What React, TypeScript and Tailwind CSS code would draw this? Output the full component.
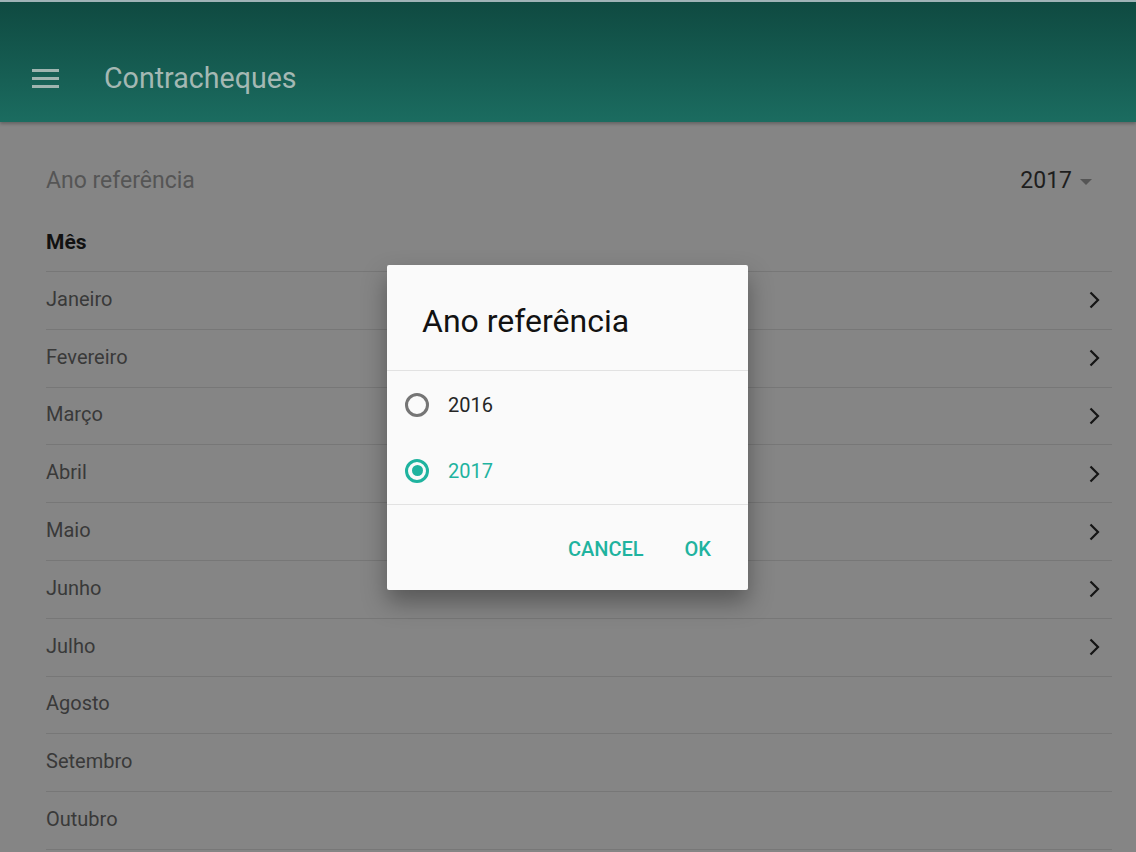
const months = [
  { name: "Janeiro", arrow: true },
  { name: "Fevereiro", arrow: true },
  { name: "Março", arrow: true },
  { name: "Abril", arrow: true },
  { name: "Maio", arrow: true },
  { name: "Junho", arrow: true },
  { name: "Julho", arrow: true },
  { name: "Agosto", arrow: false },
  { name: "Setembro", arrow: false },
  { name: "Outubro", arrow: false },
]

const Chevron = () => (
  <svg width="14" height="20" viewBox="0 0 14 20" fill="none">
    <path d="M4.5 2.5 L12 10 L4.5 17.5" stroke="#151515" strokeWidth="2.2" />
  </svg>
)

const Radio = ({ checked }: { checked: boolean }) => (
  <div
    className={`size-[24px] rounded-full border-[3px] flex items-center justify-center ${
      checked ? "border-[#1fb39f]" : "border-[#757575]"
    }`}
  >
    {checked && <div className="size-[11px] rounded-full bg-[#1fb39f]" />}
  </div>
)

export default function App() {
  return (
    <div className="relative w-[1136px] h-[852px] overflow-hidden bg-[#858585] font-['Roboto','Noto_Sans',sans-serif]">
      {/* App bar */}
      <header className="h-[122px] border-t-2 border-[#9fb3b6] bg-gradient-to-b from-[#0f4a41] to-[#1b6c60] flex items-center pl-[32px] pt-[32px] shadow-[0_2px_3px_rgba(0,0,0,0.25)]">
        <div className="flex flex-col gap-[5px] w-[27px]">
          <div className="h-[3px] bg-[#9fb5b0]" />
          <div className="h-[3px] bg-[#9fb5b0]" />
          <div className="h-[3px] bg-[#9fb5b0]" />
        </div>
        <div className="ml-[45px] text-[28.6px] text-[#a4b8b3]">Contracheques</div>
      </header>

      {/* Content */}
      <main className="px-[46px] pr-[24px]">
        <div className="flex items-center justify-between h-[58px] mt-[28px] pt-[5px]">
          <span className="text-[23px] text-[#555555]">Ano referência</span>
          <div className="flex items-center gap-[8px] mr-[20px]">
            <span className="text-[23px] text-[#1e1e1e]">2017</span>
            <svg width="12" height="6" viewBox="0 0 12 6">
              <path d="M0 0 L12 0 L6 6 Z" fill="#555555" />
            </svg>
          </div>
        </div>
        <div className="h-[63px] flex items-center pt-[6px] text-[21px] font-bold text-[#111111]">Mês</div>
        <ul>
          {months.map((m) => (
            <li
              key={m.name}
              className="h-[57.8px] border-t border-[#777777] flex items-center justify-between pr-[12px]"
            >
              <span className="text-[20px] text-[#393939] mt-[-3px]">{m.name}</span>
              {m.arrow && <Chevron />}
            </li>
          ))}
          <li className="border-t border-[#777777]" />
        </ul>
      </main>

      {/* Dialog */}
      <div className="absolute left-[387px] top-[265px] w-[361px] h-[325px] bg-[#fafafa] rounded-[2px] shadow-[0_12px_24px_rgba(0,0,0,0.35)] flex flex-col">
        <div className="h-[106px] flex items-center pl-[35px] border-b border-[#e2e2e2]">
          <span className="text-[32px] text-[#121212] mt-[6px]">Ano referência</span>
        </div>
        <div className="h-[134px] flex flex-col justify-center border-b border-[#e2e2e2]">
          <div className="h-[66px] flex items-center pl-[18px] gap-[19px]">
            <Radio checked={false} />
            <span className="text-[20px] text-[#262626]">2016</span>
          </div>
          <div className="h-[66px] flex items-center pl-[18px] gap-[19px]">
            <Radio checked={true} />
            <span className="text-[20px] text-[#1fb39f]">2017</span>
          </div>
        </div>
        <div className="flex-1 flex items-center justify-end gap-[41px] pr-[37px] pt-[2px]">
          <span className="text-[20px] font-medium text-[#1fb39f]">CANCEL</span>
          <span className="text-[20px] font-medium text-[#1fb39f]">OK</span>
        </div>
      </div>
    </div>
  )
}
